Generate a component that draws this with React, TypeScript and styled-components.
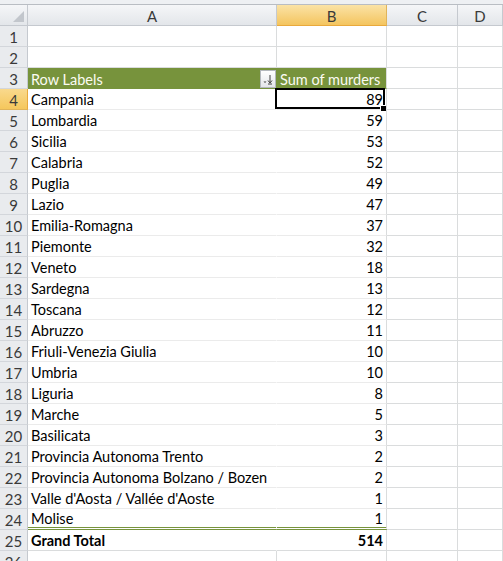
import React from "react";
import styled, { createGlobalStyle, css } from "styled-components";

const GlobalStyle = createGlobalStyle`
  html, body { margin: 0; padding: 0; background: #ffffff; overflow: hidden; }
  body { font-family: Lato, "Liberation Sans", sans-serif; }
`;

const GRID = "#dadcdd";
const PIVOT_LINE = "#ebebeb";
const GREEN = "#77933c";
const HEAD_BORDER = "#c5c9cf";

const Window = styled.div`
  width: 503px;
  height: 561px;
  overflow: hidden;
  background: #ffffff;
`;

const TopStrip = styled.div`
  height: 4px;
  background: #eef0f3;
  border-bottom: 1px solid #b9bdc3;
`;

const Sheet = styled.div`
  display: grid;
  grid-template-columns: 28px 249px 110px 71px 1fr;
  grid-auto-rows: 21px;
`;

const headBase = css`
  box-sizing: border-box;
  border-right: 1px solid ${HEAD_BORDER};
  border-bottom: 1px solid ${HEAD_BORDER};
  color: #3a3a3a;
  font-size: 15px;
  display: flex;
  align-items: center;
  justify-content: center;
  padding-top: 1px;
`;

const Corner = styled.div`
  ${headBase};
  position: relative;
  background: linear-gradient(#f5f6f8, #e3e6ea);
`;

const CornerTriangle = styled.svg`
  position: absolute;
  right: 3px;
  bottom: 3px;
`;

const ColHeader = styled.div<{ $selected?: boolean }>`
  ${headBase};
  background: ${(p) =>
    p.$selected
      ? "linear-gradient(#fbe3a6, #f4c55f)"
      : "linear-gradient(#f5f6f8, #e3e6ea)"};
  border-bottom-color: ${(p) => (p.$selected ? "#e9a93c" : HEAD_BORDER)};
  border-right-color: ${(p) => (p.$selected ? "#e0b45a" : HEAD_BORDER)};
  justify-content: center;
`;

const RowHeader = styled.div<{ $selected?: boolean }>`
  ${headBase};
  background: ${(p) =>
    p.$selected ? "linear-gradient(#f9d98d, #f5c75c)" : "#e9ebee"};
  border-right-color: ${(p) => (p.$selected ? "#e9a93c" : HEAD_BORDER)};
  border-bottom-color: ${(p) => (p.$selected ? "#e0b45a" : "#d3d6db")};
  padding-top: 2px;
`;

type Kind = "plain" | "pivotHead" | "pivot" | "pivotLast" | "total";

const Cell = styled.div<{
  $kind: Kind;
  $right?: boolean;
  $inner?: boolean;
  $active?: boolean;
}>`
  box-sizing: border-box;
  position: relative;
  display: flex;
  align-items: flex-end;
  justify-content: ${(p) => (p.$right ? "flex-end" : "flex-start")};
  padding: 0 3px 1px 3px;
  font-size: 14.5px;
  white-space: nowrap;
  color: #000000;
  background: #ffffff;
  border-right: 1px solid ${GRID};
  border-bottom: 1px solid ${GRID};

  ${(p) =>
    p.$kind === "pivotHead" &&
    css`
      background: ${GREEN};
      color: #fbfbf2;
      border-right-color: ${p.$inner ? GREEN : GRID};
      border-bottom-color: ${GREEN};
      align-items: center;
      padding-top: 2px;
      padding-bottom: 0;
    `}

  ${(p) =>
    p.$kind === "pivot" &&
    css`
      border-bottom-color: ${PIVOT_LINE};
      border-right-color: ${p.$inner ? "#ffffff" : GRID};
    `}

  ${(p) =>
    p.$kind === "pivotLast" &&
    css`
      border-bottom: 3px double ${GREEN};
      border-right-color: ${p.$inner ? "#ffffff" : GRID};
      padding-bottom: 0;
    `}

  ${(p) =>
    p.$kind === "total" &&
    css`
      font-weight: 700;
      border-right-color: ${p.$inner ? "#ffffff" : GRID};
    `}

  ${(p) =>
    p.$active &&
    css`
      &::after {
        content: "";
        position: absolute;
        top: -1px;
        left: -2px;
        right: 1px;
        bottom: 0;
        border: 2px solid #000000;
        pointer-events: none;
      }
      &::before {
        content: "";
        position: absolute;
        right: 0px;
        bottom: -2px;
        width: 5px;
        height: 5px;
        background: #000000;
        border-left: 1px solid #ffffff;
        border-top: 1px solid #ffffff;
        z-index: 2;
      }
    `}
`;

const Label = styled.span`
  overflow: visible;
`;

const FilterButton = styled.span`
  box-sizing: border-box;
  margin-left: auto;
  margin-right: -3px;
  margin-top: -1px;
  width: 16px;
  height: 18px;
  background: linear-gradient(#ffffff, #e4e6ea);
  border: 1px solid #b4b8bd;
  display: flex;
  align-items: center;
  justify-content: center;
`;

const data: [string, number][] = [
  ["Campania", 89],
  ["Lombardia", 59],
  ["Sicilia", 53],
  ["Calabria", 52],
  ["Puglia", 49],
  ["Lazio", 47],
  ["Emilia-Romagna", 37],
  ["Piemonte", 32],
  ["Veneto", 18],
  ["Sardegna", 13],
  ["Toscana", 12],
  ["Abruzzo", 11],
  ["Friuli-Venezia Giulia", 10],
  ["Umbria", 10],
  ["Liguria", 8],
  ["Marche", 5],
  ["Basilicata", 3],
  ["Provincia Autonoma Trento", 2],
  ["Provincia Autonoma Bolzano / Bozen", 2],
  ["Valle d'Aosta / Vallée d'Aoste", 1],
  ["Molise", 1],
];

const SortIcon = () => (
  <svg width="12" height="12" viewBox="0 0 12 12">
    <path d="M1.5 8.5 L4.5 8.5 L3 10 Z" fill="#404040" />
    <path d="M8 2 V9.5" stroke="#404040" strokeWidth="1" />
    <path d="M6 7.5 L8 10 L10 7.5" fill="none" stroke="#404040" strokeWidth="1" />
    <path d="M6 11 H10" stroke="#404040" strokeWidth="1" />
  </svg>
);

export default function App() {
  const rows: React.ReactNode[] = [];

  const blank = (r: number) => [
    <Cell key={`a${r}`} $kind="plain" />,
    <Cell key={`b${r}`} $kind="plain" />,
    <Cell key={`c${r}`} $kind="plain" />,
    <Cell key={`d${r}`} $kind="plain" />,
  ];

  for (let r = 1; r <= 26; r++) {
    rows.push(
      <RowHeader key={`h${r}`} $selected={r === 4}>
        {r}
      </RowHeader>
    );
    if (r <= 2 || r === 26) {
      rows.push(...blank(r));
    } else if (r === 3) {
      rows.push(
        <Cell key="a3" $kind="pivotHead" $inner>
          <Label>Row Labels</Label>
          <FilterButton>
            <SortIcon />
          </FilterButton>
        </Cell>,
        <Cell key="b3" $kind="pivotHead">
          <Label>Sum of murders</Label>
        </Cell>,
        <Cell key="c3" $kind="plain" />,
        <Cell key="d3" $kind="plain" />
      );
    } else if (r <= 24) {
      const [name, value] = data[r - 4];
      const kind: Kind = r === 24 ? "pivotLast" : "pivot";
      rows.push(
        <Cell key={`a${r}`} $kind={kind} $inner>
          <Label>{name}</Label>
        </Cell>,
        <Cell key={`b${r}`} $kind={kind} $right $active={r === 4}>
          <Label>{value}</Label>
        </Cell>,
        <Cell key={`c${r}`} $kind="plain" />,
        <Cell key={`d${r}`} $kind="plain" />
      );
    } else {
      rows.push(
        <Cell key="a25" $kind="total" $inner>
          <Label>Grand Total</Label>
        </Cell>,
        <Cell key="b25" $kind="total" $right>
          <Label>514</Label>
        </Cell>,
        <Cell key="c25" $kind="plain" />,
        <Cell key="d25" $kind="plain" />
      );
    }
  }

  return (
    <Window>
      <GlobalStyle />
      <TopStrip />
      <Sheet>
        <Corner>
          <CornerTriangle width="11" height="11" viewBox="0 0 11 11">
            <path d="M11 0 L11 11 L0 11 Z" fill="#c2c6cc" />
          </CornerTriangle>
        </Corner>
        <ColHeader>A</ColHeader>
        <ColHeader $selected>B</ColHeader>
        <ColHeader>C</ColHeader>
        <ColHeader>D</ColHeader>
        {rows}
      </Sheet>
    </Window>
  );
}
